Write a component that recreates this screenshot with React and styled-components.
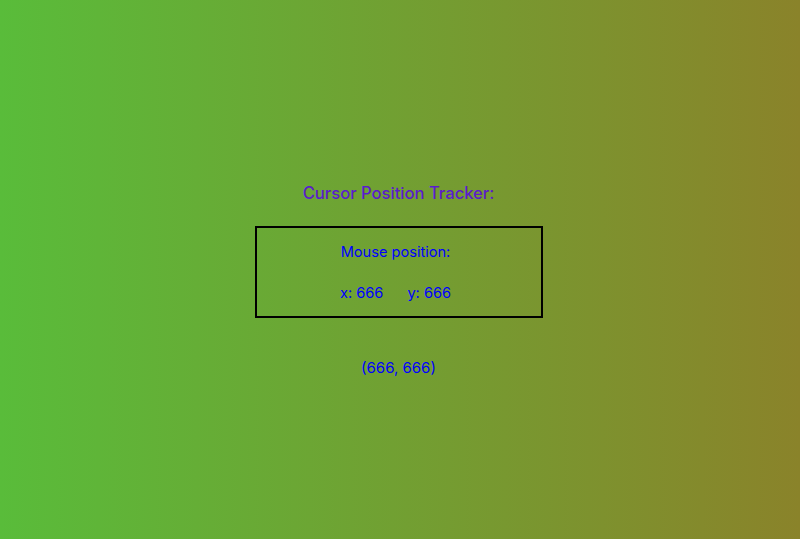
import React, { useState } from "react";
import styled, { createGlobalStyle } from "styled-components";

const GlobalStyle = createGlobalStyle`
  html, body {
    margin: 0;
    padding: 0;
    height: 100%;
  }
  #root {
    height: 100%;
  }
`;

const Page = styled.div`
  height: 100vh;
  background: linear-gradient(to right, #59bc3a, #8a832a);
  font-family: Inter, "Noto Sans", sans-serif;
  display: flex;
  flex-direction: column;
  align-items: center;
  padding: 183px 3px 0 0;
  box-sizing: border-box;
`;

const Title = styled.h1`
  margin: 0;
  font-size: 16.6px;
  font-weight: 500;
  color: #5a1ccc;
  line-height: 20px;
`;

const Box = styled.div`
  margin-top: 23px;
  width: 288px;
  height: 92px;
  box-sizing: border-box;
  border: 2px solid #000;
  display: flex;
  flex-direction: column;
  align-items: center;
  padding-top: 15px;
  color: #0000ff;
  font-size: 14.6px;
  line-height: 18px;
`;

const Label = styled.div`
  margin-right: 6px;
`;

const Coords = styled.div`
  display: flex;
  gap: 24px;
  margin-top: 23px;
  margin-right: 6px;
`;

const Pair = styled.div`
  color: #0000ff;
  font-size: 15px;
  line-height: 18px;
  margin-top: 41px;
`;

export default function App() {
  const [pos] = useState({ x: 666, y: 666 });
  return (
    <>
      <GlobalStyle />
      <Page>
        <Title>Cursor Position Tracker:</Title>
        <Box>
          <Label>Mouse position:</Label>
          <Coords>
            <span>x: {pos.x}</span>
            <span>y: {pos.y}</span>
          </Coords>
        </Box>
        <Pair>
          ({pos.x}, {pos.y})
        </Pair>
      </Page>
    </>
  );
}
